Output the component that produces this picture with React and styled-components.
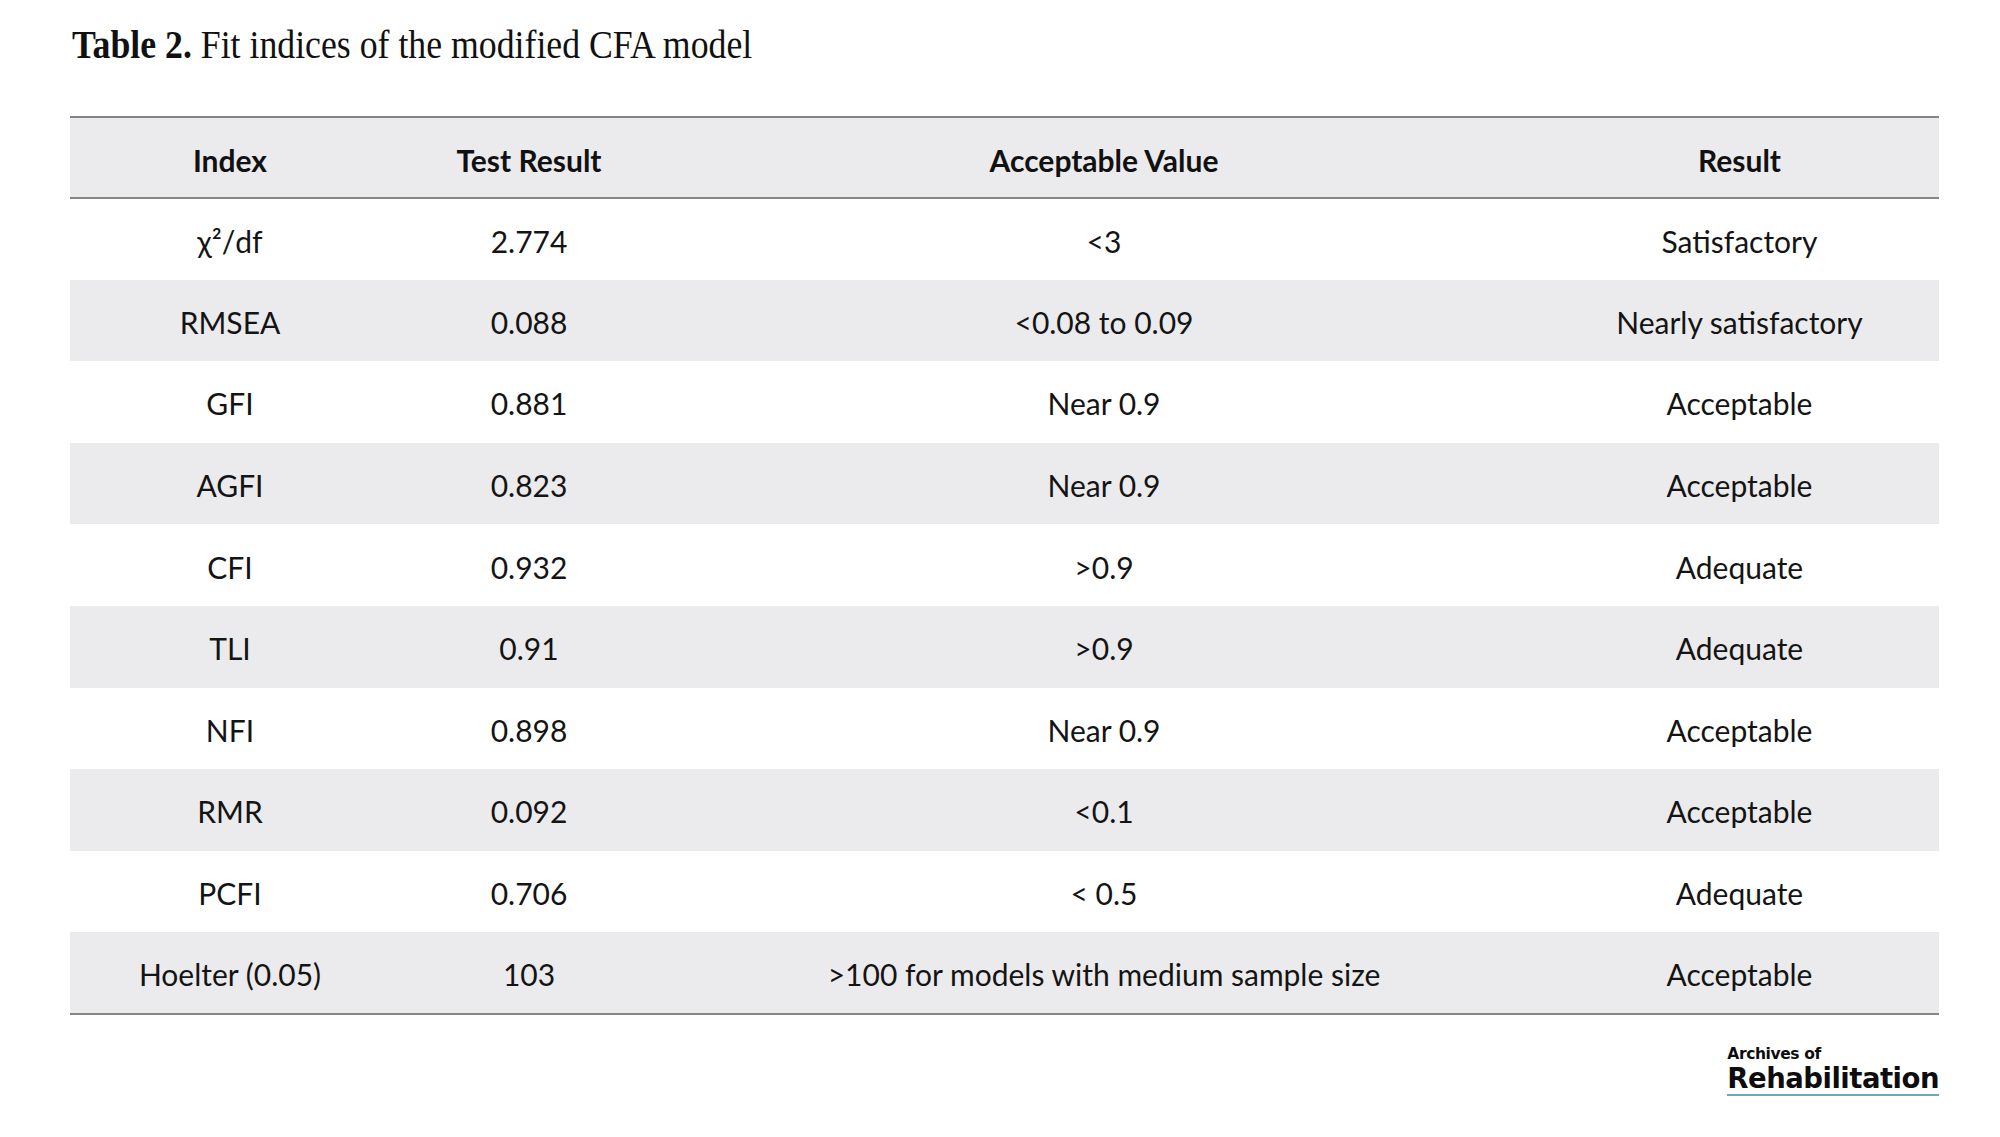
import React from "react";
import styled, { createGlobalStyle } from "styled-components";

const rows = [
  { index: "χ²/df", test: "2.774", value: "<3", result: "Satisfactory" },
  { index: "RMSEA", test: "0.088", value: "<0.08 to 0.09", result: "Nearly satisfactory" },
  { index: "GFI", test: "0.881", value: "Near 0.9", result: "Acceptable" },
  { index: "AGFI", test: "0.823", value: "Near 0.9", result: "Acceptable" },
  { index: "CFI", test: "0.932", value: ">0.9", result: "Adequate" },
  { index: "TLI", test: "0.91", value: ">0.9", result: "Adequate" },
  { index: "NFI", test: "0.898", value: "Near 0.9", result: "Acceptable" },
  { index: "RMR", test: "0.092", value: "<0.1", result: "Acceptable" },
  { index: "PCFI", test: "0.706", value: "< 0.5", result: "Adequate" },
  {
    index: "Hoelter (0.05)",
    test: "103",
    value: ">100 for models with medium sample size",
    result: "Acceptable",
  },
];

const GlobalStyle = createGlobalStyle`
  html, body {
    margin: 0;
    padding: 0;
    background: #ffffff;
  }
  body {
    font-family: Lato, "Noto Sans", sans-serif;
    color: #141414;
  }
`;

const Page = styled.div`
  width: 2000px;
  height: 1137px;
  padding: 21px 61px 0 70px;
  box-sizing: border-box;
`;

const Caption = styled.h1`
  margin: 0 0 47px 2px;
  font-family: "Liberation Serif", "Times New Roman", serif;
  font-weight: 400;
  font-size: 39.5px;
  line-height: 48px;
  color: #111;
  white-space: nowrap;
  transform: scaleX(0.905);
  transform-origin: left center;

  b {
    font-weight: 700;
  }
`;

const Table = styled.table`
  width: 1869px;
  border-collapse: collapse;
  table-layout: fixed;
  border-top: 2px solid #858585;
  border-bottom: 2px solid #858585;
`;

const Col = styled.col`
  width: ${(p) => p.$w}px;
`;

const HeadRow = styled.tr`
  height: 81px;
  background: #ebebed;
  border-bottom: 2px solid #858585;
`;

const HeadCell = styled.th`
  padding: 4px 0 0;
  font-weight: 700;
  font-size: 30px;
  text-align: center;
  color: #111;
`;

const Row = styled.tr`
  height: 81.6px;
  background: ${(p) => (p.$shade ? "#ebebed" : "#ffffff")};
`;

const Cell = styled.td`
  padding: 3px 0 0;
  font-size: 30px;
  text-align: center;
  color: #141414;
  white-space: nowrap;
`;

const Footer = styled.div`
  display: flex;
  justify-content: flex-end;
  padding-top: 30px;
`;

const Logo = styled.div`
  display: flex;
  flex-direction: column;
  font-family: "DejaVu Sans", sans-serif;
  font-weight: 700;
  color: #0d0d0d;
  border-bottom: 2px solid #6fa9b9;
  padding-bottom: 1px;
`;

const LogoSmall = styled.span`
  font-size: 15.5px;
  line-height: 19px;
  letter-spacing: -0.4px;
`;

const LogoBig = styled.span`
  font-size: 27.5px;
  line-height: 29px;
  letter-spacing: -0.5px;
`;

export default function App() {
  return (
    <>
      <GlobalStyle />
      <Page>
        <Caption>
          <b>Table 2.</b> Fit indices of the modified CFA model
        </Caption>
        <Table>
          <colgroup>
            <Col $w={320} />
            <Col $w={278} />
            <Col $w={872} />
            <Col $w={399} />
          </colgroup>
          <thead>
            <HeadRow>
              <HeadCell>Index</HeadCell>
              <HeadCell>Test Result</HeadCell>
              <HeadCell>Acceptable Value</HeadCell>
              <HeadCell>Result</HeadCell>
            </HeadRow>
          </thead>
          <tbody>
            {rows.map((r, i) => (
              <Row key={r.index} $shade={i % 2 === 1}>
                <Cell>{r.index}</Cell>
                <Cell>{r.test}</Cell>
                <Cell>{r.value}</Cell>
                <Cell>{r.result}</Cell>
              </Row>
            ))}
          </tbody>
        </Table>
        <Footer>
          <Logo>
            <LogoSmall>Archives of</LogoSmall>
            <LogoBig>Rehabilitation</LogoBig>
          </Logo>
        </Footer>
      </Page>
    </>
  );
}
